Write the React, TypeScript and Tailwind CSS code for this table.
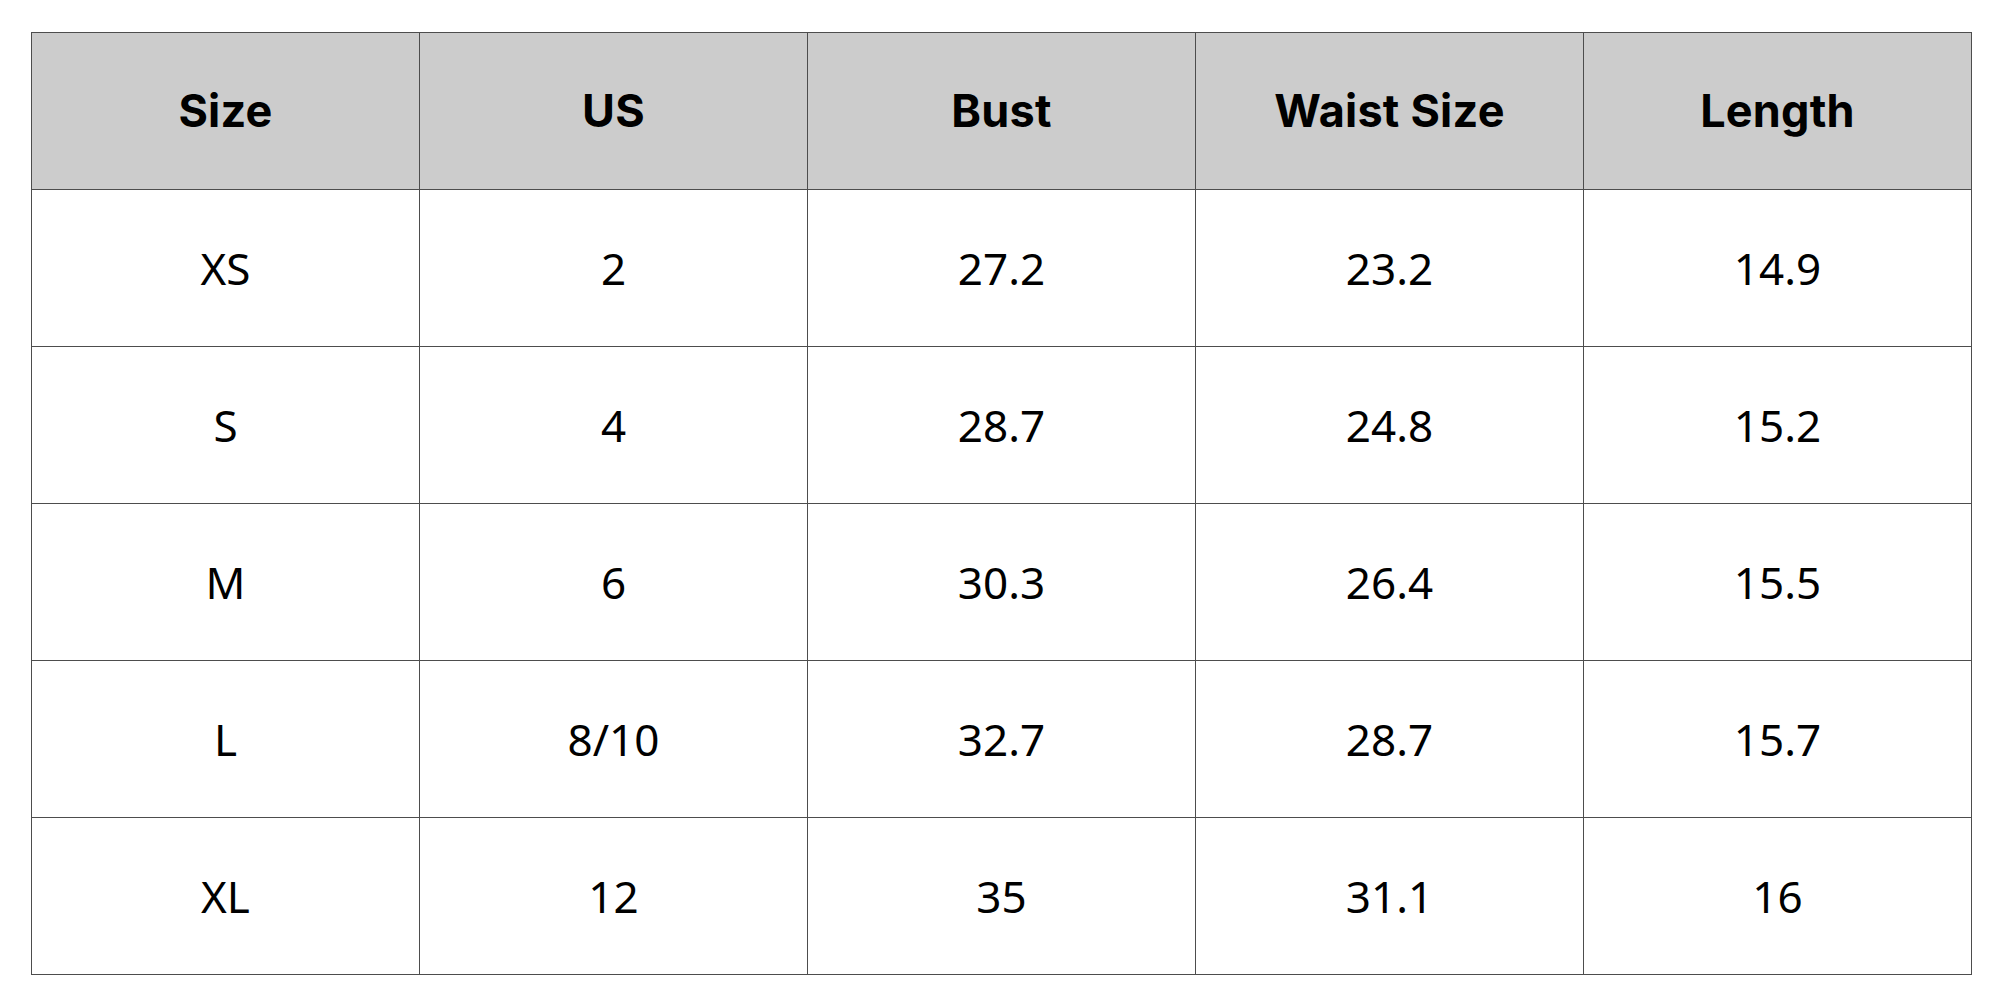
import React from "react";

const headers = ["Size", "US", "Bust", "Waist Size", "Length"];
const rows = [
  ["XS", "2", "27.2", "23.2", "14.9"],
  ["S", "4", "28.7", "24.8", "15.2"],
  ["M", "6", "30.3", "26.4", "15.5"],
  ["L", "8/10", "32.7", "28.7", "15.7"],
  ["XL", "12", "35", "31.1", "16"],
];

export default function App() {
  return (
    <div
      className="w-[2000px] h-[1000px] bg-white pt-[32px] pl-[31px]"
      style={{ fontFamily: "Inter, 'Noto Sans', sans-serif" }}
    >
      <table className="table-fixed border-collapse w-[1941px] text-black">
        <thead>
          <tr className="bg-[#cccccc]">
            {headers.map((h) => (
              <th
                key={h}
                className="h-[157px] border border-[#4d4d4d] text-[45px] font-bold text-center align-middle tracking-[0.005em]"
              >
                {h}
              </th>
            ))}
          </tr>
        </thead>
        <tbody>
          {rows.map((r, i) => (
            <tr key={i}>
              {r.map((c, j) => (
                <td
                  key={j}
                  className="h-[157px] border border-[#4d4d4d] text-[44px] font-normal text-center align-middle font-['Noto_Sans',sans-serif]"
                >
                  {c}
                </td>
              ))}
            </tr>
          ))}
        </tbody>
      </table>
    </div>
  );
}
